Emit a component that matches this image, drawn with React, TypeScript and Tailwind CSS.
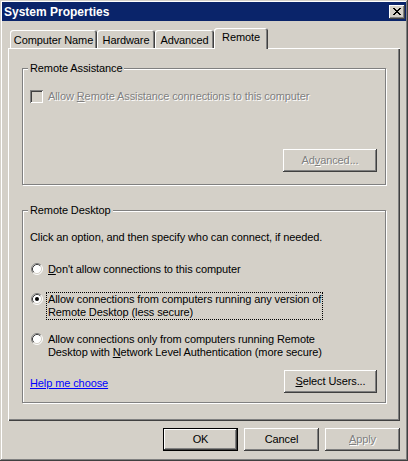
import React from 'react'

function CloseGlyph() {
  const rows = ['XX....XX', '.XX..XX.', '..XXXX..', '...XX...', '..XXXX..', '.XX..XX.', 'XX....XX']
  return (
    <svg width="8" height="7" viewBox="0 0 8 7" shapeRendering="crispEdges">
      {rows.map((r, y) =>
        r.split('').map((c, x) => (c === 'X' ? <rect key={`${x}-${y}`} x={x} y={y} width="1" height="1" fill="#000" /> : null))
      )}
    </svg>
  )
}

function Radio({ checked }: { checked?: boolean }) {
  return (
    <svg width="12" height="12" viewBox="0 0 12 12" className="shrink-0 mt-[1px]">
      <circle cx="6" cy="6" r="5" fill="#fff" />
      <path d="M2.11 9.89 A5.5 5.5 0 0 1 9.89 2.11" fill="none" stroke="#808080" strokeWidth="1" />
      <path d="M9.89 2.11 A5.5 5.5 0 0 1 2.11 9.89" fill="none" stroke="#ffffff" strokeWidth="1" />
      <path d="M2.82 9.18 A4.5 4.5 0 0 1 9.18 2.82" fill="none" stroke="#404040" strokeWidth="1" />
      <path d="M9.18 2.82 A4.5 4.5 0 0 1 2.82 9.18" fill="none" stroke="#d4d0c8" strokeWidth="1" />
      {checked && <circle cx="6" cy="6" r="2" fill="#000" />}
    </svg>
  )
}

function Tab({ label, w, active }: { label: string, w: string, active?: boolean }) {
  if (active) {
    return (
      <div className={`${w} h-[21px] bg-[#d4d0c8] flex items-start justify-center pt-[3px] rounded-t-[3px] shadow-[inset_1px_1px_0_#ffffff,inset_-1px_0_0_#404040,inset_-2px_0_0_#808080]`}>
        {label}
      </div>
    )
  }
  return (
    <div className={`${w} h-[18px] mb-[1px] flex items-center justify-center pt-[3px] rounded-t-[3px] shadow-[inset_1px_1px_0_#ffffff,inset_-1px_0_0_#404040,inset_-2px_0_0_#808080]`}>
      {label}
    </div>
  )
}

export default function App() {
  return (
    <div className="w-[408px] h-[461px] bg-[#d4d0c8] pt-[2px] px-[2px] flex flex-col font-['Liberation_Sans',Arial,sans-serif] text-[11px] leading-[13px] tracking-[-0.1px] text-black select-none shadow-[inset_-1px_-1px_0_#404040,inset_1px_1px_0_#d4d0c8,inset_-2px_-2px_0_#808080,inset_2px_2px_0_#ffffff]">
      {/* title bar */}
      <div className="h-[19px] bg-[#0a246a] flex items-center justify-between pl-[2px] pr-[1px]">
        <span className="text-white font-bold text-[12px] leading-[14px] tracking-normal">System Properties</span>
        <button className="w-[16px] h-[14px] bg-[#d4d0c8] flex items-center justify-center shadow-[inset_-1px_-1px_0_#404040,inset_1px_1px_0_#ffffff,inset_-2px_-2px_0_#808080]">
          <CloseGlyph />
        </button>
      </div>

      <div className="px-[6px] pt-[7px] flex flex-col">
        {/* tabs */}
        <div className="relative z-10 flex items-end h-[21px] -mb-[1px] pl-[2px]">
          <Tab label="Computer Name" w="w-[87px]" />
          <Tab label="Hardware" w="w-[58px]" />
          <Tab label="Advanced" w="w-[59px]" />
          <Tab label="Remote" w="w-[54px]" active />
        </div>

        {/* panel */}
        <div className="h-[373px] flex flex-col px-[14px] pt-[14px] shadow-[inset_1px_1px_0_#ffffff,inset_-1px_-1px_0_#404040,inset_-2px_-2px_0_#808080]">
          <fieldset className="min-w-0 border border-[#808080] shadow-[inset_1px_1px_0_#ffffff,1px_1px_0_#ffffff]">
            <legend className="ml-[5px] px-[2px] bg-[#d4d0c8] leading-[12px]">Remote Assistance</legend>
            <div className="flex flex-col pt-[16px] pl-[7px] pr-[8px] pb-[12px]">
              <div className="flex items-center gap-[5px]">
                <span className="w-[13px] h-[13px] shrink-0 bg-[#d4d0c8] shadow-[inset_1px_1px_0_#808080,inset_-1px_-1px_0_#ffffff,inset_2px_2px_0_#404040,inset_-2px_-2px_0_#d4d0c8]" />
                <span className="text-[#808080] [text-shadow:1px_1px_0_#ffffff]">
                  Allow <span className="underline">R</span>emote Assistance connections to this computer
                </span>
              </div>
              <button className="self-end mt-[46px] w-[94px] h-[23px] text-[#808080] [text-shadow:1px_1px_0_#ffffff] shadow-[inset_-1px_-1px_0_#404040,inset_1px_1px_0_#ffffff,inset_-2px_-2px_0_#808080]">
                Ad<span className="underline">v</span>anced...
              </button>
            </div>
          </fieldset>

          <fieldset className="min-w-0 mt-[19px] border border-[#808080] shadow-[inset_1px_1px_0_#ffffff,1px_1px_0_#ffffff]">
            <legend className="ml-[5px] px-[2px] bg-[#d4d0c8] leading-[12px]">Remote Desktop</legend>
            <div className="flex flex-col pt-[15px] pl-[7px] pr-[8px] pb-[9px]">
              <p>Click an option, and then specify who can connect, if needed.</p>

              <div className="flex items-start gap-[3px] pl-[1px] mt-[18px]">
                <Radio />
                <span className="border border-transparent px-[1px] whitespace-nowrap">
                  <span className="underline">D</span>on't allow connections to this computer
                </span>
              </div>

              <div className="flex items-start gap-[3px] pl-[1px] mt-[15px]">
                <Radio checked />
                <span className="border border-dotted border-black px-[1px] whitespace-nowrap">
                  Allow connections from computers running any version of
                  <br />
                  Remote Desktop (less secure)
                </span>
              </div>

              <div className="flex items-start gap-[3px] pl-[1px] mt-[12px]">
                <Radio />
                <span className="border border-transparent px-[1px] whitespace-nowrap">
                  Allow connections only from computers running Remote
                  <br />
                  Desktop with <span className="underline">N</span>etwork Level Authentication (more secure)
                </span>
              </div>

              <div className="flex items-center justify-between mt-[10px]">
                <a className="mt-[3px] text-[#0000ff] underline cursor-pointer">Help me choose</a>
                <button className="w-[93px] h-[23px] shadow-[inset_-1px_-1px_0_#404040,inset_1px_1px_0_#ffffff,inset_-2px_-2px_0_#808080]">
                  <span className="underline">S</span>elect Users...
                </button>
              </div>
            </div>
          </fieldset>
        </div>

        {/* dialog buttons */}
        <div className="flex justify-end gap-[6px] mt-[7px]">
          <button className="w-[75px] h-[23px] shadow-[inset_0_0_0_1px_#000000,inset_-2px_-2px_0_#404040,inset_2px_2px_0_#ffffff,inset_-3px_-3px_0_#808080]">
            OK
          </button>
          <button className="w-[75px] h-[23px] shadow-[inset_-1px_-1px_0_#404040,inset_1px_1px_0_#ffffff,inset_-2px_-2px_0_#808080]">
            Cancel
          </button>
          <button className="w-[75px] h-[23px] text-[#808080] [text-shadow:1px_1px_0_#ffffff] shadow-[inset_-1px_-1px_0_#404040,inset_1px_1px_0_#ffffff,inset_-2px_-2px_0_#808080]">
            <span className="underline">A</span>pply
          </button>
        </div>
      </div>
    </div>
  )
}
